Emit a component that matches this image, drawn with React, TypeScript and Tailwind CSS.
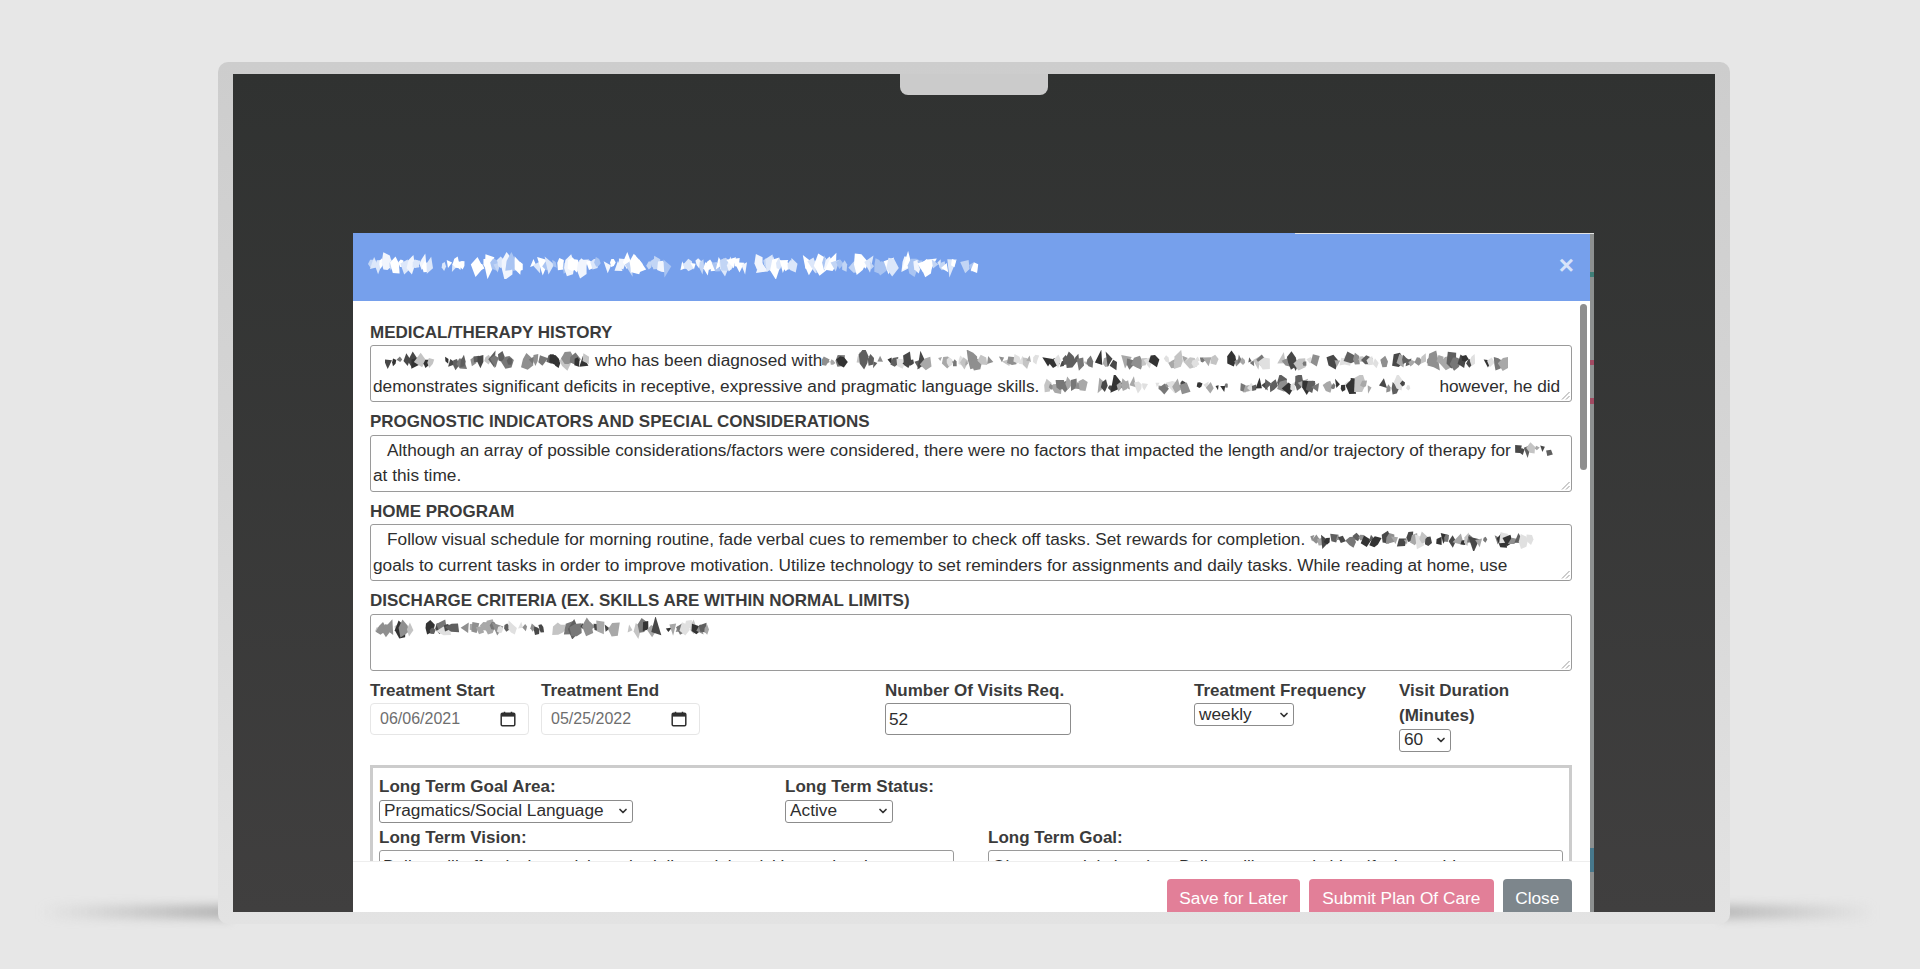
import { ChevronDown } from "lucide-react"

const font = "[font-family:'Liberation_Sans',Arial,sans-serif]"

const darkInk = ["#333333", "#484848", "#5f5f5f", "#777777", "#8f8f8f", "#a8a8a8", "#c4c4c4", "#e0e0e0"]
const lightInk = ["#ffffff", "#ffffff", "#ffffff", "#f1f5fd", "#dce7fa", "#c2d5f5", "#a9c4f2"]

function rng(seed: number) {
  let s = seed
  return () => {
    s = (s + 0x6d2b79f5) | 0
    let t = Math.imul(s ^ (s >>> 15), 1 | s)
    t = (t + Math.imul(t ^ (t >>> 7), 61 | t)) ^ t
    return ((t ^ (t >>> 14)) >>> 0) / 4294967296
  }
}

// scrambled patches where the original blurs out names
function Smudge({ w, seed, light = false, h = 22 }: { w: number; seed: number; light?: boolean; h?: number }) {
  const r = rng(seed)
  const ink = light ? lightInk : darkInk
  const blobs: { pts: string; fill: string }[] = []
  let x = 3
  while (x < w - 4) {
    const end = Math.min(x + 16 + r() * (light ? 62 : 40), w - 3)
    while (x < end) {
      const cy = h / 2 + (r() - 0.5) * 5
      const n = 3 + Math.floor(r() * 4)
      const rad = 2.2 + r() * 3.6
      const tall = light ? 1.7 : 1 + r() * 0.7
      const tilt = r() * 6.28
      const pts: string[] = []
      for (let i = 0; i < n; i++) {
        const a = tilt + (i / n) * Math.PI * 2
        const d = rad * (0.6 + r() * 0.9)
        pts.push(`${(x + Math.cos(a) * d).toFixed(1)},${(cy + Math.sin(a) * d * tall).toFixed(1)}`)
      }
      blobs.push({ pts: pts.join(" "), fill: ink[Math.floor(r() * ink.length)] })
      x += 2.5 + r() * (light ? 3 : 4.5)
    }
    x += 4 + r() * (light ? 8 : 9)
  }
  return (
    <svg width={w} height={h} viewBox={`0 0 ${w} ${h}`} className="inline-block align-middle blur-[0.6px] shrink-0">
      {blobs.map((b, i) => (
        <polygon key={i} points={b.pts} fill={b.fill} />
      ))}
    </svg>
  )
}

function Grip() {
  return (
    <svg width="9" height="9" viewBox="0 0 9 9" className="absolute right-[1px] bottom-[1px]">
      <path d="M8.5 1 1 8.5M8.5 5 5 8.5" stroke="#9a9a9a" strokeWidth="1" fill="none" />
    </svg>
  )
}

function Field({ label, children }: { label: string; children: React.ReactNode }) {
  return (
    <div className="h-[89.5px]">
      <div className="h-[32.5px] pt-[7px] text-[17px] leading-[25px] font-bold text-[#3b3b3b] whitespace-nowrap">{label}</div>
      <div className="relative h-[57px] border border-[#9a9a9a] rounded-[3px] pl-[2px] pt-[2px] text-[17.25px] leading-[25.5px] text-[#2e2e2e] overflow-hidden whitespace-nowrap">
        {children}
        <Grip />
      </div>
    </div>
  )
}

function DateBox({ value }: { value: string }) {
  return (
    <div className="flex items-center justify-between w-[159px] h-[32px] border border-[#e6e6e6] rounded-[4px] pl-[9px] pr-[12px]">
      <span className="text-[16px] text-[#6e6e6e]">{value}</span>
      <svg width="16" height="16" viewBox="0 0 16 16" fill="none">
        <rect x="1.2" y="2.2" width="13.6" height="12.6" rx="1.2" stroke="#2f2f2f" strokeWidth="1.5" />
        <rect x="1.2" y="2.2" width="13.6" height="3.4" fill="#2f2f2f" />
        <path d="M4.5 0.8v2M11.5 0.8v2" stroke="#2f2f2f" strokeWidth="1.5" />
      </svg>
    </div>
  )
}

function Picker({ value, width }: { value: string; width: string }) {
  return (
    <div className={`flex items-center justify-between ${width} h-[23px] border border-[#8c8c8c] rounded-[3px] pl-[4px] pr-[3px] text-[17.25px] text-[#2e2e2e] bg-white`}>
      <span className="whitespace-nowrap">{value}</span>
      <ChevronDown size={12} strokeWidth={3.5} className="text-[#333333]" />
    </div>
  )
}

const labelCls = "text-[17px] leading-[25.5px] font-bold text-[#3b3b3b] whitespace-nowrap"

export default function App() {
  return (
    <div className={`relative w-full h-[969px] overflow-hidden bg-[#e7e7e7] pt-[62px] ${font}`}>
      {/* shadow the laptop throws left and right */}
      <div className="absolute left-[40px] top-[905px] w-[190px] h-[14px] blur-[5px] bg-linear-to-r from-transparent to-[#b2b2b2]" />
      <div className="absolute left-[1720px] top-[905px] w-[155px] h-[14px] blur-[5px] bg-linear-to-l from-transparent to-[#b8b8b8]" />

      {/* laptop body */}
      <div className="relative mx-[218px] w-[1512px] h-[862px] rounded-[10px] px-[15px] pt-[12px] bg-linear-to-b from-[#cdcdcd] via-[#d6d6d6] to-[#e3e3e3]">
        <div className="relative h-[838px] overflow-hidden bg-linear-to-b from-[#303231] to-[#403f3f] pt-[159px] pl-[120px]">
          <div className="absolute left-[667px] top-0 w-[148px] h-[21px] rounded-b-[8px] bg-[#cbcbcb]" />

          {/* modal */}
          <div className="relative flex w-[1241px] h-[679px]">
            <div className="w-[1237px] h-full bg-white flex flex-col">
              <div className="flex items-center justify-between h-[68px] shrink-0 bg-[#76a0ec] pl-[15px] pr-[16px] pb-[5px]">
                <Smudge w={612} seed={17} light h={28} />
                <span className="text-[26px] leading-none font-bold text-[#d7e4f9]">×</span>
              </div>

              <div className="relative h-[560px] shrink-0 overflow-hidden pl-[17px] pr-[18px] pt-[11.5px]">
                <Field label="MEDICAL/THERAPY HISTORY">
                  <div className="flex items-center pl-[12px]">
                    <Smudge w={210} seed={5} />
                    <span>who has been diagnosed with</span>
                    <Smudge w={686} seed={8} />
                  </div>
                  <div className="flex items-center">
                    <span className="mr-[5px]">demonstrates significant deficits in receptive, expressive and pragmatic language skills.</span>
                    <Smudge w={375} seed={11} />
                    <span className="ml-[20px]">however, he did</span>
                  </div>
                </Field>
                <Field label="PROGNOSTIC INDICATORS AND SPECIAL CONSIDERATIONS">
                  <div className="flex items-center gap-[4px]">
                    <span className="pl-[14px]">Although an array of possible considerations/factors were considered, there were no factors that impacted the length and/or trajectory of therapy for</span>
                    <Smudge w={48} seed={21} />
                  </div>
                  <div>at this time.</div>
                </Field>
                <Field label="HOME PROGRAM">
                  <div className="flex items-center gap-[4px]">
                    <span className="pl-[14px]">Follow visual schedule for morning routine, fade verbal cues to remember to check off tasks. Set rewards for completion.</span>
                    <Smudge w={232} seed={27} />
                  </div>
                  <div>goals to current tasks in order to improve motivation. Utilize technology to set reminders for assignments and daily tasks. While reading at home, use</div>
                </Field>
                <Field label="DISCHARGE CRITERIA (EX. SKILLS ARE WITHIN NORMAL LIMITS)">
                  <div className="flex items-center pl-[2px]">
                    <Smudge w={336} seed={33} />
                  </div>
                </Field>

                {/* dates, visits, frequency */}
                <div className="grid grid-cols-[171px_344px_309px_205px_1fr] h-[94.5px] pt-[7px]">
                  <div>
                    <div className={labelCls}>Treatment Start</div>
                    <DateBox value="06/06/2021" />
                  </div>
                  <div>
                    <div className={labelCls}>Treatment End</div>
                    <DateBox value="05/25/2022" />
                  </div>
                  <div>
                    <div className={labelCls}>Number Of Visits Req.</div>
                    <input
                      readOnly
                      value="52"
                      className="block w-[186px] h-[32px] border border-[#8c8c8c] rounded-[3px] pl-[3px] text-[17.25px] text-[#2e2e2e] outline-none"
                    />
                  </div>
                  <div>
                    <div className={labelCls}>Treatment Frequency</div>
                    <Picker value="weekly" width="w-[100px]" />
                  </div>
                  <div>
                    <div className={labelCls}>Visit Duration</div>
                    <div className={labelCls}>(Minutes)</div>
                    <Picker value="60" width="w-[52px]" />
                  </div>
                </div>

                {/* long term goal block, runs on under the footer */}
                <div className="border-[3px] border-[#cccccc] h-[120px] pl-[6px] pr-[6px] pt-[6px]">
                  <div className="flex">
                    <div className="w-[406px]">
                      <div className={labelCls}>Long Term Goal Area:</div>
                      <Picker value="Pragmatics/Social Language" width="w-[254px]" />
                    </div>
                    <div>
                      <div className={labelCls}>Long Term Status:</div>
                      <Picker value="Active" width="w-[108px]" />
                    </div>
                  </div>
                  <div className="grid grid-cols-[575px_575px] gap-x-[34px] mt-[2px]">
                    <div>
                      <div className={labelCls}>Long Term Vision:</div>
                      <div className="h-[40px] border border-[#9a9a9a] rounded-[3px] pl-[3px] pt-[3px] text-[17.25px] text-[#2e2e2e] whitespace-nowrap overflow-hidden">
                        Bailey will effectively participate in daily social activities and tasks.
                      </div>
                    </div>
                    <div>
                      <div className={labelCls}>Long Term Goal:</div>
                      <div className="h-[40px] border border-[#9a9a9a] rounded-[3px] pl-[3px] pt-[3px] text-[17.25px] text-[#2e2e2e] whitespace-nowrap overflow-hidden">
                        Given a social situation, Bailey will correctly identify the problem.
                      </div>
                    </div>
                  </div>
                </div>
              </div>

              <div className="relative bg-white flex-1 border-t border-[#eeeeee] pt-[17px] pr-[18px] flex justify-end gap-[9px] text-[17.25px] text-white">
                <div className="w-[133px] h-[40px] rounded-[4px] bg-[#e27f98] flex items-center justify-center">Save for Later</div>
                <div className="w-[184.5px] h-[40px] rounded-[4px] bg-[#e27f98] flex items-center justify-center">Submit Plan Of Care</div>
                <div className="w-[69.5px] h-[40px] rounded-[4px] bg-[#7d868c] flex items-center justify-center">Close</div>
              </div>
            </div>

            {/* sliver of the page behind, at the modal's right edge */}
            <div className="relative w-[4px] h-full bg-[#8d9090]">
              <div className="absolute top-[39px] h-[5px] w-full bg-[#3f7f78]" />
              <div className="absolute top-[127px] h-[5px] w-full bg-[#a24a62]" />
              <div className="absolute top-[165px] h-[6px] w-full bg-[#a24a62]" />
              <div className="absolute top-[615px] h-[24px] w-full bg-[#47788c]" />
            </div>

            <div className="absolute left-[1227px] top-[71px] w-[7px] h-[166px] rounded-full bg-[#8e8e8e]" />
            <div className="absolute left-[942px] top-0 w-[299px] h-[1px] bg-[#e4e4e4]" />
          </div>
        </div>
      </div>
    </div>
  )
}
